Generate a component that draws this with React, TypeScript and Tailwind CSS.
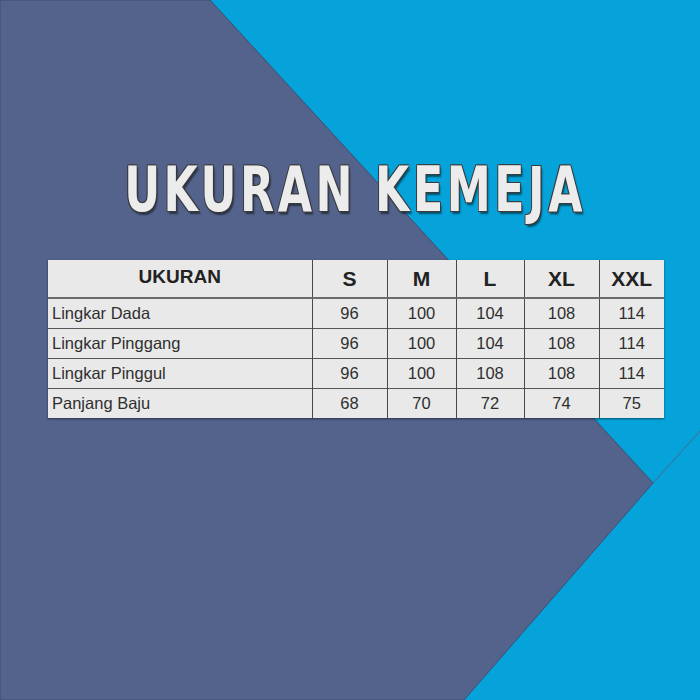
import React from "react";

const sizes = ["S", "M", "L", "XL", "XXL"];

const rows: { label: string; values: number[] }[] = [
  { label: "Lingkar Dada", values: [96, 100, 104, 108, 114] },
  { label: "Lingkar Pinggang", values: [96, 100, 104, 108, 114] },
  { label: "Lingkar Pinggul", values: [96, 100, 108, 108, 114] },
  { label: "Panjang Baju", values: [68, 70, 72, 74, 75] },
];

const colWidths = ["w-[264px]", "w-[75px]", "w-[69px]", "w-[68px]", "w-[75px]", "w-[65px]"];

function Background() {
  return (
    <svg className="absolute inset-0" width="700" height="700" viewBox="0 0 700 700">
      <rect width="700" height="700" fill="#05a3d9" />
      <polygon points="0,0 210,0 653,483 464,700 0,700" fill="#53638b" stroke="#3f4d73" strokeWidth="1" />
      <line x1="653" y1="483" x2="700" y2="431" stroke="#2f7fae" strokeWidth="1.2" />
    </svg>
  );
}

export default function App() {
  return (
    <div className="relative w-[700px] h-[700px] overflow-hidden">
      <Background />
      <div className="relative flex flex-col pt-[150px]">
        <h1
          className="self-center ml-[10px] text-[63px] leading-[80px] font-bold text-[#ececec] tracking-[4.6px] scale-x-[0.78] whitespace-nowrap [text-shadow:1px_1px_0_#3a3a3a,-1px_-1px_0_#3a3a3a,1px_-1px_0_#3a3a3a,-1px_1px_0_#3a3a3a,2px_3px_2px_rgba(0,0,0,0.5)]"
          style={{ fontFamily: '"DejaVu Sans Condensed", "DejaVu Sans", sans-serif' }}
        >
          UKURAN KEMEJA
        </h1>
        <table
          className="self-start table-fixed w-[616px] mt-[30px] ml-[48px] border-collapse bg-[#e9e9e9] text-[#2f2f2f] shadow-[0_1px_2px_rgba(0,0,0,0.5)]"
          style={{ fontFamily: '"Liberation Sans", Arial, sans-serif' }}
        >
          <colgroup>
            {colWidths.map((w, i) => (
              <col key={i} className={w} />
            ))}
          </colgroup>
          <thead>
            <tr className="h-[38px] border-b-2 border-[#6a6a6a]">
              <th className="text-[19px] font-bold text-[#222] pb-[2px]">UKURAN</th>
              {sizes.map((s) => (
                <th key={s} className="border-l border-[#4a4a4a] text-[21px] font-bold text-[#222]">
                  {s}
                </th>
              ))}
            </tr>
          </thead>
          <tbody>
            {rows.map((r, ri) => (
              <tr key={r.label} className={`h-[30px] ${ri > 0 ? "border-t border-[#555]" : ""}`}>
                <td className="text-left pl-[4px] text-[16.5px] whitespace-nowrap">{r.label}</td>
                {r.values.map((v, i) => (
                  <td key={i} className="border-l border-[#4a4a4a] text-center text-[16.5px]">
                    {v}
                  </td>
                ))}
              </tr>
            ))}
          </tbody>
        </table>
      </div>
    </div>
  );
}
